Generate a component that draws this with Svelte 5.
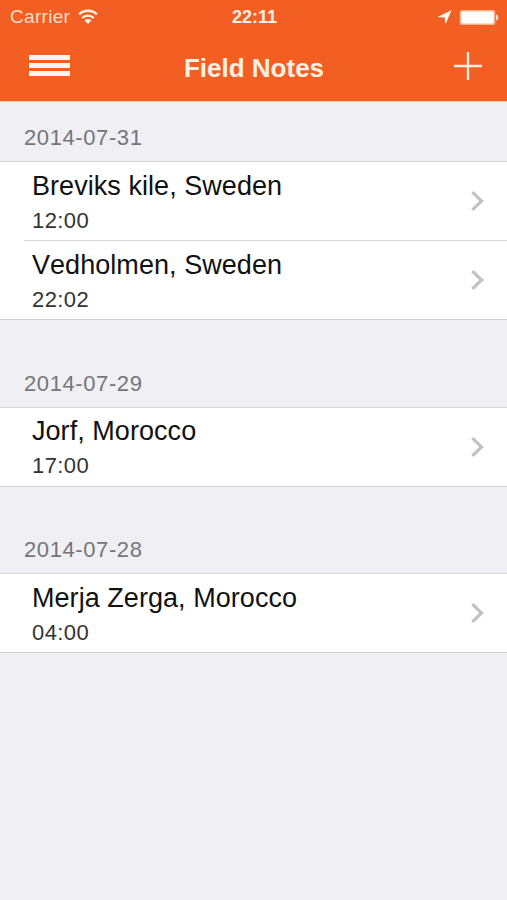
<script>
    const sections = [
        {
            date: '2014-07-31',
            notes: [
                { place: 'Breviks kile, Sweden', time: '12:00' },
                { place: 'Vedholmen, Sweden', time: '22:02' }
            ]
        },
        {
            date: '2014-07-29',
            notes: [{ place: 'Jorf, Morocco', time: '17:00' }]
        },
        {
            date: '2014-07-28',
            notes: [{ place: 'Merja Zerga, Morocco', time: '04:00' }]
        }
    ];
</script>

<div class="screen">
    <header>
        <div class="status-bar">
            <div class="carrier">
                <span>Carrier</span>
                <svg class="wifi" width="20" height="15" viewBox="0 0 20 15">
                    <g fill="none" stroke="#fff0e6" stroke-width="2.4">
                        <path d="M1.1 5.4a12.6 12.6 0 0 1 17.8 0" />
                        <path d="M4.2 9a8.2 8.2 0 0 1 11.6 0" />
                    </g>
                    <path fill="#fff0e6" d="M6.6 11.5a4.8 4.8 0 0 1 6.8 0L10 15z" />
                </svg>
            </div>
            <span class="clock">22:11</span>
            <div class="indicators">
                <svg width="15" height="15" viewBox="0 0 15 15">
                    <path fill="#fff8f2" d="M14.5 .3L8.6 14.3L7.6 7.6L.4 7z" />
                </svg>
                <svg width="40" height="17" viewBox="0 0 40 17">
                    <rect x=".7" y=".9" width="35.6" height="15.2" rx="2.6" fill="#ffb48f" />
                    <rect x="2.3" y="2.5" width="32.4" height="12" rx="1.4" fill="#fff" />
                    <path fill="#ffdcc8" d="M37 5.6q2.3 0 2.3 2.9T37 11.4z" />
                </svg>
            </div>
        </div>
        <nav>
            <button class="menu" aria-label="Menu">
                <i></i>
                <i></i>
                <i></i>
            </button>
            <h1>Field Notes</h1>
            <button class="add" aria-label="Add note">
                <svg width="28" height="28" viewBox="0 0 28 28">
                    <path d="M14 0v28M0 14h28" stroke="#ffeee2" stroke-width="2.3" />
                </svg>
            </button>
        </nav>
    </header>

    <main>
        {#each sections as section (section.date)}
            <section>
                <h2>{section.date}</h2>
                <ul>
                    {#each section.notes as note}
                        <li>
                            <div class="note">
                                <span class="place">{note.place}</span>
                                <span class="time">{note.time}</span>
                            </div>
                            <svg width="13" height="20" viewBox="0 0 13 20">
                                <path d="M1.3 1.2L10.6 10L1.3 18.8" fill="none" stroke="#c2c2c4" stroke-width="3.2" />
                            </svg>
                        </li>
                    {/each}
                </ul>
            </section>
        {/each}
    </main>
</div>

<style>
    :global(body) {
        margin: 0;
        background: #efeff4;
    }

    .screen {
        width: 507px;
        height: 900px;
        overflow: hidden;
        background: #efeff4;
        font-family: "Liberation Sans", Arial, sans-serif;
    }

    header {
        height: 101px;
        background: #f35e22;
        border-bottom: 1px solid #fbc3a8;
        color: #fff0e6;
    }

    .status-bar {
        display: grid;
        grid-template-columns: 1fr auto 1fr;
        align-items: center;
        height: 34px;
        padding: 0 8px 0 10px;
        font-size: 19px;
    }

    .carrier {
        display: flex;
        align-items: center;
        gap: 8px;
        letter-spacing: 0.3px;
        color: #ffdcc8;
    }

    .wifi {
        margin-top: -2px;
    }

    .clock {
        font-size: 18px;
        font-weight: bold;
    }

    .indicators {
        display: flex;
        align-items: center;
        justify-content: flex-end;
        gap: 7px;
    }

    nav {
        display: grid;
        grid-template-columns: 1fr auto 1fr;
        align-items: center;
        height: 67px;
        padding: 0 25px 0 29px;
    }

    button {
        padding: 0;
        border: none;
        background: none;
    }

    .menu {
        display: flex;
        flex-direction: column;
        gap: 3px;
        width: 41px;
        margin-top: -4px;
    }

    .menu i {
        height: 5px;
        width: 100%;
        background: #fff6ee;
    }

    .add {
        justify-self: end;
        height: 28px;
        margin-top: -4px;
    }

    svg {
        display: block;
        flex: none;
    }

    h1 {
        margin: 1px 3px 0 0;
        font-size: 26px;
        font-weight: bold;
    }

    section {
        margin-bottom: 27.6px;
    }

    h2 {
        display: flex;
        align-items: flex-end;
        box-sizing: border-box;
        height: 59px;
        margin: 0;
        padding: 0 0 10px 24px;
        font-size: 22px;
        font-weight: normal;
        letter-spacing: 0.6px;
        color: #75757a;
    }

    ul {
        margin: 0;
        padding: 0;
        list-style: none;
        background: #fff;
        border-top: 1px solid #d5d5d9;
        border-bottom: 1px solid #d2d2d6;
    }

    li {
        display: flex;
        align-items: center;
        justify-content: space-between;
        box-sizing: border-box;
        height: 78px;
        margin-left: 24px;
        padding: 0 23px 0 8px;
    }

    li + li {
        height: 79px;
        border-top: 1px solid #d8d8db;
    }

    .note {
        display: flex;
        flex-direction: column;
        padding-top: 3px;
    }

    .place {
        font-size: 27px;
        line-height: 36px;
        letter-spacing: 0.05px;
        font-kerning: none;
        color: #111;
    }

    .time {
        font-size: 22px;
        line-height: 34px;
        letter-spacing: 0.4px;
        color: #333;
    }
</style>
